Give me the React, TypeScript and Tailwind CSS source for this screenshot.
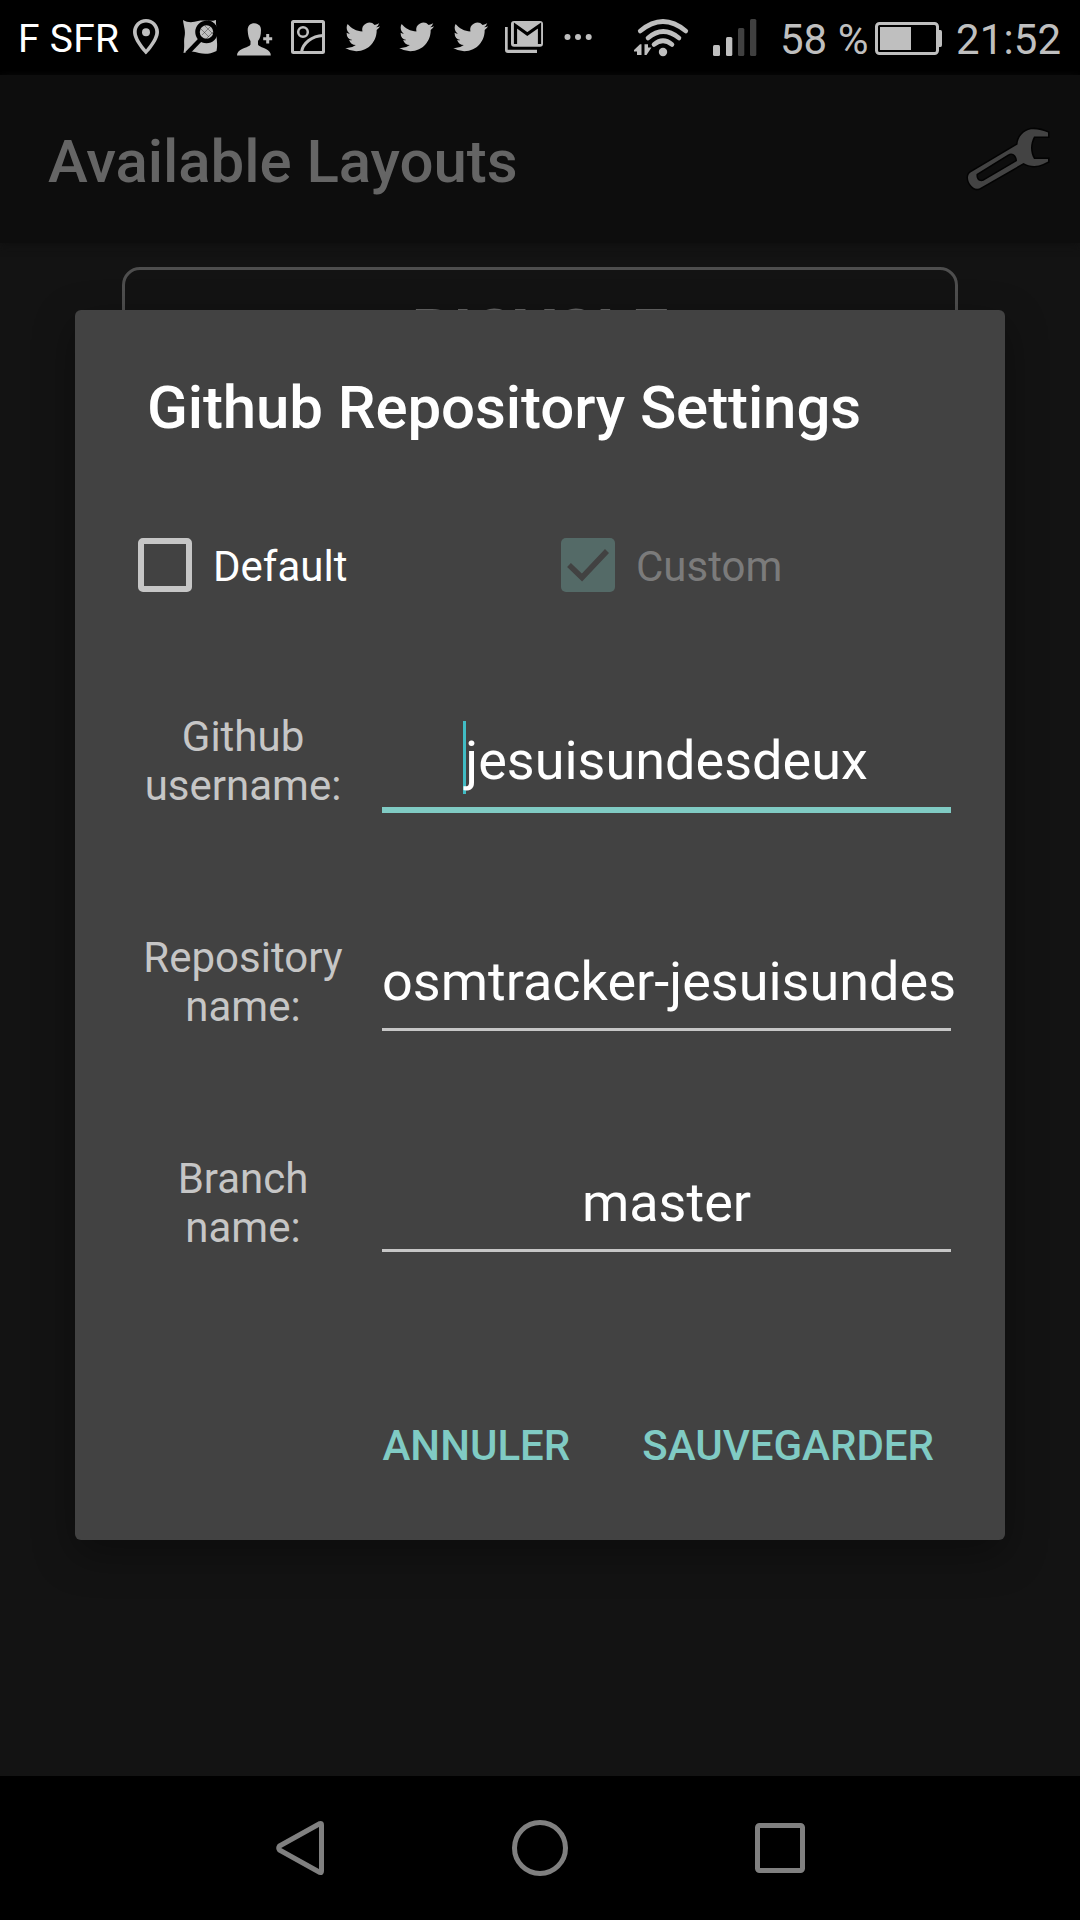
import React from "react";

const ICON = "#bfbfbf";

function StatusIcons() {
  return (
    <svg width="500" height="75" viewBox="120 0 500 75" fill={ICON} className="shrink-0">
      <path
        fillRule="evenodd"
        d="M146 19C138.800 19 133 24.800 133 32C133 41.500 146 54.500 146 54.500S159 41.500 159 32C159 24.800 153.200 19 146 19ZM146 22.500C151.300 22.500 155.300 26.700 155.300 32C155.300 37.500 150 44.500 146 49.500C142 44.500 136.700 37.500 136.700 32C136.700 26.700 140.700 22.500 146 22.500Z"
      />
      <circle cx="146" cy="32.300" r="4" />
      {/* map with magnifier */}
      <path d="M183 20C188 23 193 22.500 198 21C204 19.500 210 22 216 20C215.500 24 217 28 216.500 34C216.500 40 218 44 216.500 51C210 54 205 54.500 199 53C194 51 189 51 183.500 53C185 46 183.500 42 184.500 37C186 31 183.500 26 183 20Z" />
      <g stroke="#000" fill="none">
        <path d="M187 53.500L200 40" strokeWidth="4.500" />
        <circle cx="206.500" cy="32" r="9" strokeWidth="4.500" fill={ICON} />
        <path d="M201 29l8 8M205 26l8 8M202 35l8-8M206 39l7-7" strokeWidth="0.700" opacity="0.500" />
        <path d="M208 21.500Q215 23 216.500 30" strokeWidth="2.500" />
      </g>
      {/* contact */}
      <path d="M254.500 23.300C250 23.300 247.500 26 247.700 30.500C247.900 35 249 39 250.500 41V44.500C250 47 239 48.500 237.300 53.500L237 55.500H270.800L270.500 53.500C269 48.500 258.500 47 258 44.500V41C260 38.500 261 35 261 30C261 26 259 24 254.500 23.300Z" />
      <path d="M266.200 34h3v3.300h3v3h-3v3.300h-3v-3.300h-3v-3h3z" />
      {/* image */}
      <g fill="none" stroke={ICON} strokeWidth="3">
        <rect x="292.500" y="21.500" width="31" height="31" rx="1" />
        <circle cx="303" cy="32" r="4.800" strokeWidth="2.500" />
        <path d="M301.500 52C303 43 312 36 323 35.500" />
      </g>
      {[345, 399, 453].map((x) => (
        <svg key={x} x={x} y="19.500" width="35.500" height="35" viewBox="0 0 24 24">
          <path d="M23.950 4.570a10 10 0 0 1-2.820.77 4.960 4.960 0 0 0 2.160-2.720c-.95.560-2 .960-3.130 1.180a4.920 4.920 0 0 0-8.380 4.480C7.690 8.100 4.070 6.130 1.640 3.160a4.820 4.820 0 0 0-.67 2.480c0 1.710.87 3.210 2.190 4.100a4.900 4.900 0 0 1-2.230-.62v.060a4.920 4.920 0 0 0 3.950 4.830 5 5 0 0 1-2.210.08 4.940 4.940 0 0 0 4.600 3.420A9.870 9.870 0 0 1 0 19.540a13.990 13.990 0 0 0 7.550 2.210c9.050 0 14-7.500 14-13.980 0-.21 0-.42-.02-.63A9.940 9.940 0 0 0 23.950 4.570z" />
        </svg>
      ))}
      {/* stacked mail */}
      <path d="M505 27h2.700v22.700H537V53H508Q505 53 505 50Z" />
      <rect x="511" y="21" width="32" height="25.700" rx="3" />
      <path
        d="M515.500 44V25.500L527.300 34L539.500 25.500V44"
        fill="none"
        stroke="#000"
        strokeWidth="3.200"
        strokeLinejoin="miter"
      />
      <circle cx="567.500" cy="37" r="3" />
      <circle cx="578" cy="37" r="3" />
      <circle cx="588.700" cy="37" r="3" />
    </svg>
  );
}

function RadioIcons() {
  return (
    <svg width="130" height="75" viewBox="630 0 130 75" fill={ICON} className="shrink-0">
      <g fill="none" stroke={ICON} strokeWidth="4.600" strokeLinecap="round">
        <path d="M640.200 31Q663 12 685.800 31" />
        <path d="M648 38Q663 25 679 38" />
        <path d="M654 44.500Q663 37 672 44.500" />
      </g>
      <circle cx="663" cy="52" r="4.200" />
      <path d="M634 50L640 44.200H641.500V55H637V51.500H634ZM644.500 44.200H648V47.500H651.500L646.500 55H644.500Z" />
      <rect x="713" y="45" width="7" height="11" rx="1.500" />
      <rect x="726" y="37" width="6.300" height="19" rx="1.500" />
      <rect x="738" y="28" width="6.300" height="28" rx="1.500" fill="#404040" />
      <rect x="750" y="19" width="6.300" height="37" rx="1.500" fill="#404040" />
    </svg>
  );
}

function Battery() {
  return (
    <svg width="70" height="75" viewBox="874 0 70 75" fill={ICON} className="shrink-0">
      <rect x="876.500" y="23.500" width="61" height="30" rx="3" fill="none" stroke={ICON} strokeWidth="3" />
      <rect x="880" y="27" width="31" height="23" />
      <path d="M938 30h2.500q1.500 0 1.500 2v13q0 2-1.500 2H938z" />
    </svg>
  );
}

function Wrench() {
  return (
    <svg width="92" height="70" viewBox="962 124 92 70" className="shrink-0">
      <path
        fillRule="evenodd"
        d="M1048 132.500C1043 130 1036 128.700 1031 129.300C1023 131 1018 137 1017.500 144.500L970.500 172.500C967 175 967.500 180 970 184C973 188.500 977 190 981 187.500L1023.500 163C1029 166.500 1037 167 1043 164L1048 161.500V159H1034C1030 152 1030 144 1034 136.500H1048ZM1008 154.500C1012 151.500 1017 155 1017 161L983 181C978 182 976 178 976.500 174Z"
        fill="#434343"
        stroke="#030303"
        strokeWidth="3"
        paintOrder="stroke"
      />
    </svg>
  );
}

function Field({ label, value, focused = false }: { label: React.ReactNode; value: string; focused?: boolean }) {
  return (
    <div className="flex h-[221px]">
      <div className="w-[200px] pt-[19px] text-center text-[42px] leading-[49px] text-[#c6c6c6]">{label}</div>
      <div className="ml-[39px] w-[569px]">
        <div className="relative h-[114px] whitespace-nowrap pt-9 text-center text-[54px] leading-[63px] text-white">
          {focused && <span className="absolute left-[81px] top-[28px] h-[73px] w-[3px] bg-[#41bcc4]" />}
          <span className="relative">{value}</span>
        </div>
        <div className={focused ? "h-[6px] bg-[#80cbc4]" : "h-[3px] bg-[#c6c6c6]"} />
      </div>
    </div>
  );
}

export default function App() {
  return (
    <div className="flex h-[1920px] w-[1080px] flex-col overflow-hidden bg-[#131313] font-[Roboto,sans-serif]">
      <div className="flex h-[75px] shrink-0 items-center whitespace-nowrap bg-black text-[#bfbfbf]">
        <div className="w-[120px] pl-[18px] pt-1 text-[39px] leading-[75px] tracking-[0.25px] text-white">F SFR</div>
        <StatusIcons />
        <div className="w-[10px]" />
        <RadioIcons />
        <div className="w-[114px] pl-5 pt-1 text-[42px] leading-[75px]">58 %</div>
        <Battery />
        <div className="pl-3 pt-1 text-[42px] leading-[75px] tracking-[0.1px]">21:52</div>
      </div>

      <div className="flex h-[168px] shrink-0 items-center justify-between bg-[#0d0d0d] pl-12 pr-[26px] shadow-[0_2px_8px_#0f0f0f]">
        <h1 className="pt-[5px] text-[60px] font-medium leading-[70px] tracking-[-0.06px] text-[#656565]">
          Available Layouts
        </h1>
        <Wrench />
      </div>

      <div className="relative flex-1 pt-6">
        <div className="mx-[122px] h-[200px] rounded-[18px] border-[3px] border-[#4e4e4e] pt-7 text-center text-[65px] font-bold leading-[70px] text-[#656565]">
          BICYCLE
        </div>

        <div
          role="dialog"
          className="absolute left-[75px] top-[67px] flex h-[1230px] w-[930px] flex-col rounded-[6px] bg-[#424242] shadow-[0_14px_40px_rgba(0,0,0,0.35)]"
        >
          <h2 className="pl-[72px] pt-[63px] text-[60px] font-medium leading-[70px] tracking-[-0.1px] text-white">
            Github Repository Settings
          </h2>
          <div className="mt-[95px] flex h-[54px] items-center pl-[63px] text-[42px] leading-[54px]">
            <div className="flex w-[423px] items-center">
              <span className="size-[54px] rounded-[5px] border-[6px] border-[#c6c6c6]" />
              <span className="-mb-[3px] pl-[21px] text-white">Default</span>
            </div>
            <svg width="54" height="54" viewBox="0 0 54 54">
              <rect width="54" height="54" rx="5" fill="#546a67" />
              <path d="M8 27L21 39.500L46 13" fill="none" stroke="#424242" strokeWidth="5.500" />
            </svg>
            <span className="-mb-[3px] pl-[21px] text-[#7b7b7b]">Custom</span>
          </div>

          <div className="mt-[101px] pl-[68px]">
            <Field label={<>Github<br />username:</>} value="jesuisundesdeux" focused />
            <Field label={<>Repository<br />name:</>} value="osmtracker-jesuisundes" />
            <Field label={<>Branch<br />name:</>} value="master" />
          </div>

          <div className="mt-[65px] flex justify-end gap-[72px] pr-[71px] text-[42px] font-medium leading-[49px] text-[#80cbc4]">
            <button>ANNULER</button>
            <button>SAUVEGARDER</button>
          </div>
        </div>
      </div>

      <div className="h-[144px] shrink-0 bg-black">
        <svg width="1080" height="144" viewBox="0 1776 1080 144" fill="none" stroke="#808080" strokeWidth="5">
          <path d="M279.500 1846L320 1823.500Q321.500 1823 321.500 1825V1871Q321.500 1873 320 1872.500L279.500 1850Q278 1848 279.500 1846Z" strokeLinejoin="round" />
          <circle cx="540" cy="1848" r="25.500" />
          <rect x="757.500" y="1825.500" width="45" height="45" rx="2" />
        </svg>
      </div>
    </div>
  );
}
